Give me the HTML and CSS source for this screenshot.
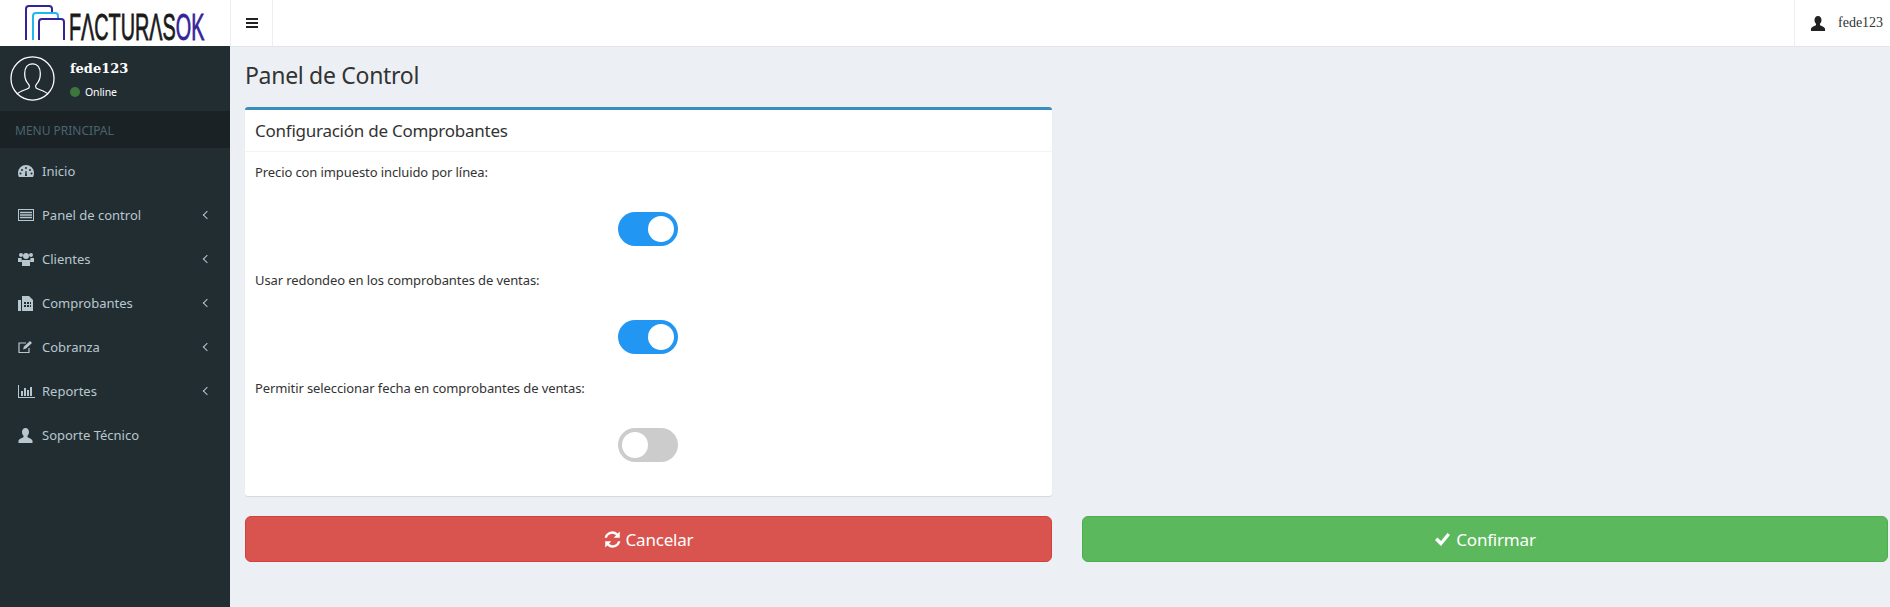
FILE: index.html
```html
<!DOCTYPE html>
<html lang="en">
<head>
  <meta charset="UTF-8" />
  <title>FacturasOK</title>
  <link rel="stylesheet" href="styles.css">
</head>
<body>

  <header class="topbar">
    <div class="logo">
      <svg class="logo-mark" width="42" height="36" viewBox="0 0 42 36" fill="none">
        <path d="M1 35V4Q1 1 4 1H24Q27 1 27 4V8" stroke="#33249a" stroke-width="2"/>
        <path d="M8 35V11Q8 8 11 8H30Q33 8 33 11V15" stroke="#1fb6f2" stroke-width="2"/>
        <path d="M14 35V17Q14 14 17 14H36Q39 14 39 17V35" stroke="#33249a" stroke-width="2"/>
      </svg>
      <span class="logo-text">FΛCTURΛS<b>OK</b></span>
    </div>
    <div class="toggle-btn">
      <svg width="14" height="12" viewBox="0 0 14 12" fill="#222"><path d="M1 1h12v2H1zM1 5h12v2H1zM1 9h12v2H1z"/></svg>
    </div>
    <div class="top-user">
      <svg width="14" height="15" viewBox="0 0 14 15" fill="#222"><path d="M7 0c2.200 0 3.500 1.700 3.500 4 0 1.600-.7 3-1.500 3.800v1.400c1.800.9 5 1.800 5 3.800v2H0v-2c0-2 3.200-2.900 5-3.800V7.800C4.200 7 3.500 5.600 3.500 4 3.500 1.700 4.800 0 7 0z"/></svg>
      <span>fede123</span>
    </div>
  </header>

  <div class="layout">
    <aside class="sidebar">
      <div class="user-panel">
        <svg class="avatar" width="45" height="45" viewBox="0 0 46 46" fill="none" stroke="#fff" stroke-width="1.300">
          <circle cx="23" cy="23" r="22"/>
          <path d="M7 39c3-3 8-4 12-6 1-1 1-3 0-4-2-2-4-6-4-11 0-6 3-10 8-10s8 4 8 10c0 5-2 9-4 11-1 1-1 3 0 4 4 2 9 3 12 6"/>
        </svg>
        <div class="user-info">
          <div class="user-name">fede123</div>
          <div class="user-status"><i class="dot"></i>Online</div>
        </div>
      </div>
      <div class="menu-header">MENU PRINCIPAL</div>
      <ul class="menu">
        <li>
          <svg width="16" height="14" viewBox="0 0 16 14" fill="#b8c7ce"><path d="M8 1a8 8 0 0 0-8 8c0 1.500.4 3 1 4h14c.6-1 1-2.500 1-4a8 8 0 0 0-8-8zM8 3a1 1 0 1 1 0 2 1 1 0 0 1 0-2zM4 5a1 1 0 1 1 0 2 1 1 0 0 1 0-2zM12 5a1 1 0 1 1 0 2 1 1 0 0 1 0-2zM2.500 8.500a1 1 0 1 1 0 2 1 1 0 0 1 0-2zM13.500 8.500a1 1 0 1 1 0 2 1 1 0 0 1 0-2zM7 12l.5-5h1l.5 5z" fill-rule="evenodd"/></svg>
          <span>Inicio</span>
        </li>
        <li>
          <svg width="16" height="12" viewBox="0 0 16 12" fill="none" stroke="#b8c7ce"><rect x=".5" y=".5" width="15" height="11"/><path d="M2 3.500h12M2 6h12M2 8.500h12" stroke-width="1.500"/></svg>
          <span>Panel de control</span><em class="arrow"></em>
        </li>
        <li>
          <svg width="16" height="14" viewBox="0 0 16 14" fill="#b8c7ce"><circle cx="3" cy="3" r="2"/><circle cx="13" cy="3" r="2"/><circle cx="8" cy="4" r="3"/><path d="M0 6h3.500L4 10H0zM12.500 6H16v4h-4zM4 8h8v6H4z"/></svg>
          <span>Clientes</span><em class="arrow"></em>
        </li>
        <li>
          <svg width="15" height="15" viewBox="0 0 15 15" fill="#b8c7ce"><path d="M0 4h3v11H0zM4 0h7l4 4v11H4zM6 6v2h2V6zM9 6v2h2V6zM12 6v2h1V6zM6 9v2h2V9zM9 9v2h2V9zM12 9v2h1V9z" fill-rule="evenodd"/></svg>
          <span>Comprobantes</span><em class="arrow"></em>
        </li>
        <li>
          <svg width="15" height="14" viewBox="0 0 15 14" fill="none" stroke="#b8c7ce" stroke-width="1.200"><path d="M11 8v4.500H1V3h7"/><path d="M5 9.500l1-3 6-5.500 2 2-6 5.500z" fill="#b8c7ce" stroke="none"/></svg>
          <span>Cobranza</span><em class="arrow"></em>
        </li>
        <li>
          <svg width="17" height="13" viewBox="0 0 17 13" fill="#b8c7ce"><path d="M0 0h1v12h16v1H0zM3 6h2v5H3zM6 3h2v8H6zM9 5h2v6H9zM12 2h2v9h-2z"/></svg>
          <span>Reportes</span><em class="arrow"></em>
        </li>
        <li>
          <svg width="15" height="15" viewBox="0 0 14 15" fill="#b8c7ce"><path d="M7 0c2.200 0 3.500 1.700 3.500 4 0 1.600-.7 3-1.500 3.800v1.400c1.800.9 5 1.800 5 3.800v2H0v-2c0-2 3.200-2.900 5-3.800V7.800C4.200 7 3.500 5.600 3.500 4 3.500 1.700 4.800 0 7 0z"/></svg>
          <span>Soporte Técnico</span>
        </li>
      </ul>
    </aside>

    <main class="content">
      <h1>Panel de Control</h1>
      <div class="grid">
        <section class="box">
          <h3>Configuración de Comprobantes</h3>
          <div class="box-body">
            <div class="field">
              <label>Precio con impuesto incluido por línea:</label>
              <div class="switch on"></div>
            </div>
            <div class="field">
              <label>Usar redondeo en los comprobantes de ventas:</label>
              <div class="switch on"></div>
            </div>
            <div class="field">
              <label>Permitir seleccionar fecha en comprobantes de ventas:</label>
              <div class="switch"></div>
            </div>
          </div>
        </section>
      </div>
      <div class="grid actions">
        <button class="btn btn-danger">
          <svg width="17" height="17" viewBox="1.500 1.500 14 14" fill="#fff"><path d="M14.500 2v5h-5l1.900-1.900A4.500 4.500 0 0 0 4 7H2a6.500 6.500 0 0 1 10.800-3.400zM2.500 15v-5h5l-1.900 1.900A4.500 4.500 0 0 0 13 10h2a6.500 6.500 0 0 1-10.800 3.400z"/></svg>
          Cancelar
        </button>
        <button class="btn btn-success">
          <svg width="17" height="15" viewBox="0 0 17 15" fill="#fff"><path d="M1 8l2.500-2.500L7 9l6.500-8L16 3 7 14z"/></svg>
          Confirmar
        </button>
      </div>
    </main>
  </div>

</body>
</html>
```

FILE: styles.css
```css
* {
  box-sizing: border-box;
}
html, body {
  height: 100%;
}
body {
  margin: 0;
  font-family: "Noto Sans", sans-serif;
  font-size: 13px;
  letter-spacing: -0.1px;
  color: #333;
  background: #ecf0f5;
  overflow: hidden;
}
.topbar {
  display: flex;
  height: 46px;
  background: white;
}
.logo {
  width: 230px;
  display: flex;
  align-items: flex-end;
  gap: 2px;
  padding: 0 0 5px 25px;
}
.logo-text {
  display: block;
  font-family: "Liberation Sans", sans-serif;
  font-size: 36px;
  line-height: 27px;
  letter-spacing: 0;
  color: #1a1a1a;
  -webkit-text-stroke: 0.8px;
  transform: scaleX(0.55);
  transform-origin: left center;
  width: 136px;
  white-space: nowrap;
}
.logo-text b {
  font-weight: normal;
  color: #33249a;
}
.toggle-btn {
  width: 43px;
  display: flex;
  align-items: center;
  justify-content: center;
  border-left: 1px solid #eee;
  border-right: 1px solid #eee;
}
.top-user {
  margin-left: auto;
  width: 96px;
  display: flex;
  align-items: center;
  gap: 13px;
  padding-left: 16px;
  border-left: 1px solid #eee;
  font-family: "Liberation Serif", serif;
  font-size: 14px;
  letter-spacing: 0;
}
.layout {
  display: flex;
  height: calc(100% - 46px);
}
.sidebar {
  width: 230px;
  flex-shrink: 0;
  background: #222d32;
}
.user-panel {
  display: flex;
  height: 65px;
  padding: 10px 10px 0;
  gap: 15px;
}
.user-name {
  font-family: "DejaVu Serif", serif;
  font-weight: bold;
  font-size: 13px;
  letter-spacing: 0;
  color: white;
  margin-top: 4px;
  line-height: 18px;
}
.user-status {
  display: flex;
  align-items: center;
  gap: 5px;
  margin-top: 6px;
  font-size: 10.500px;
  letter-spacing: -0.1px;
  color: white;
  line-height: 16px;
}
.dot {
  width: 10px;
  height: 10px;
  border-radius: 50%;
  background: #3c763d;
}
.menu-header {
  height: 37px;
  line-height: 39px;
  padding-left: 15px;
  font-size: 12px;
  letter-spacing: 0;
  color: #4b646f;
  background: #1a2226;
}
.menu {
  list-style: none;
  margin: 0;
  padding: 1px 0 0;
  letter-spacing: 0;
}
.menu li {
  position: relative;
  display: flex;
  align-items: center;
  height: 44px;
  padding-left: 18px;
  color: #b8c7ce;
}
.menu li svg {
  flex-shrink: 0;
}
.menu li span {
  position: absolute;
  left: 42px;
}
.arrow {
  position: absolute;
  right: 20px;
  width: 6px;
  height: 6px;
  border-left: 1px solid #b8c7ce;
  border-bottom: 1px solid #b8c7ce;
  transform: rotate(45deg);
}
.content {
  flex: 1;
  padding: 0 2px 0 15px;
  border-top: 1px solid #e2e5ea;
}
h1 {
  margin: 11px 0 0;
  font-size: 23px;
  letter-spacing: -0.3px;
  font-weight: normal;
  line-height: 34px;
}
.grid {
  display: grid;
  grid-template-columns: 807px 806px;
  gap: 30px;
}
.box {
  margin-top: 15px;
  height: 389px;
  background: white;
  border-top: 3px solid #3c8dbc;
  border-radius: 3px;
  box-shadow: 0 1px 1px rgba(0,0,0,0.1);
}
.box h3 {
  margin: 0;
  height: 42px;
  padding: 0 10px;
  font-size: 17px;
  letter-spacing: -0.25px;
  font-weight: normal;
  line-height: 42px;
  border-bottom: 1px solid #f4f4f4;
}
.box-body {
  padding: 10px 12px 0 10px;
}
.field {
  height: 108px;
}
.field label {
  display: block;
  line-height: 20px;
}
.switch {
  position: relative;
  width: 60px;
  height: 34px;
  margin: 30px auto 0;
  background: #ccc;
  border-radius: 34px;
}
.switch::before {
  content: "";
  position: absolute;
  left: 4px;
  top: 4px;
  width: 26px;
  height: 26px;
  border-radius: 50%;
  background: white;
}
.switch.on {
  background: #2196f3;
}
.switch.on::before {
  left: 30px;
}
.actions {
  margin-top: 20px;
}
.btn {
  height: 46px;
  font-family: inherit;
  font-size: 17px;
  letter-spacing: -0.2px;
  color: white;
  border-radius: 6px;
  border: 1px solid;
  display: flex;
  align-items: center;
  justify-content: center;
  gap: 5px;
}
.btn-danger {
  background: #d9534f;
  border-color: #d43f3a;
}
.btn-success {
  background: #5cb85c;
  border-color: #4cae4c;
}
```
